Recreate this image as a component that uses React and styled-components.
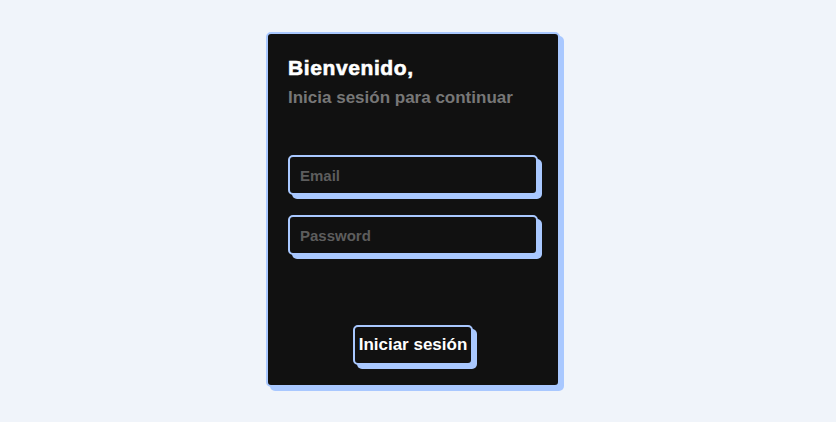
import styled, { createGlobalStyle } from 'styled-components'

const GlobalStyle = createGlobalStyle`
   html, body {
      margin: 0;
      padding: 0;
      background-color: #f0f4fa;
      font-family: "Liberation Sans", Arial, sans-serif;
   }
`

const App = () => {
   return (
      <Page>
         <GlobalStyle />
         <LoginForm onSubmit={(e) => e.preventDefault()}>
            <Title>
               <Heading>Bienvenido,</Heading>
               <SubHeading>Inicia sesión para continuar</SubHeading>
            </Title>
            <Input type="email" name="email" placeholder="Email" />
            <Input type="password" name="password" placeholder="Password" />
            <ButtonConfirm type="submit">Iniciar sesión</ButtonConfirm>
         </LoginForm>
      </Page>
   )
}

const Page = styled.div`
   display: flex;
   justify-content: center;
   align-items: center;
   min-height: 100vh;
   padding: 0 10px 3px 0;
   box-sizing: border-box;
`
const LoginForm = styled.form`
   --main-color: #a9c8ff;
   padding: 20px;
   background: #111111;
   display: flex;
   flex-direction: column;
   align-items: flex-start;
   gap: 20px;
   border-radius: 5px;
   border: 2px solid var(--main-color);
   box-shadow: 4px 4px var(--main-color);
   width: 250px;
`
const Title = styled.div`
   display: flex;
   flex-direction: column;
   margin: 0 0 25px 0;
   height: 56px;
`
const Heading = styled.span`
   display: block;
   color: #ffffff;
   font-weight: 900;
   font-size: 21px;
   line-height: 28px;
   letter-spacing: 0.6px;
   -webkit-text-stroke: 0.6px #ffffff;
`
const SubHeading = styled.span`
   display: block;
   color: #777777;
   font-weight: 600;
   font-size: 17px;
   line-height: 28px;
   margin-top: 2px;
`
const Input = styled.input`
   width: 250px;
   height: 40px;
   box-sizing: border-box;
   border-radius: 5px;
   border: 2px solid var(--main-color);
   background-color: #111111;
   box-shadow: 4px 4px var(--main-color);
   font-family: inherit;
   font-size: 15px;
   font-weight: 600;
   color: #ffffff;
   padding: 5px 10px;
   outline: none;
   &::placeholder {
      color: #666666;
      opacity: 0.9;
   }
`
const ButtonConfirm = styled.button`
   margin: 50px auto 0 auto;
   width: 120px;
   height: 40px;
   border-radius: 5px;
   border: 2px solid var(--main-color);
   background-color: #111111;
   box-shadow: 4px 4px var(--main-color);
   font-family: inherit;
   font-size: 17px;
   font-weight: 700;
   color: #ffffff;
   padding: 0;
   cursor: pointer;
`

export default App
